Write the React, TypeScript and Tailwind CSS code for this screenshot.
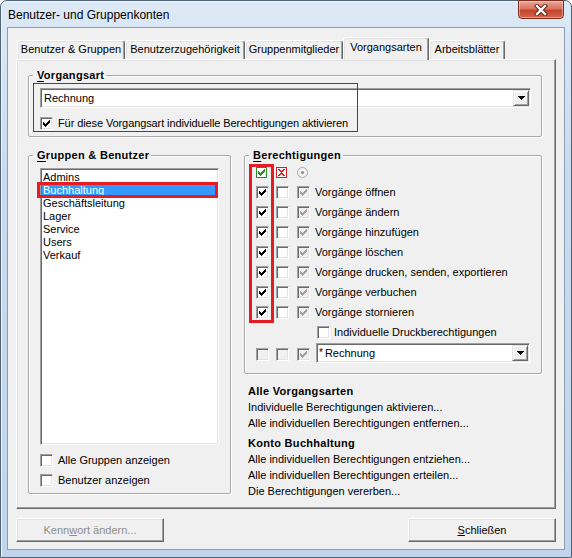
import React from "react";

const sunken =
  "border border-t-[#a0a0a0] border-l-[#a0a0a0] border-r-white border-b-white shadow-[inset_1px_1px_0_#696969,inset_-1px_-1px_0_#e3e3e3]";
const raised =
  "border border-t-[#e3e3e3] border-l-[#e3e3e3] border-r-[#696969] border-b-[#696969] shadow-[inset_1px_1px_0_#ffffff,inset_-1px_-1px_0_#a0a0a0]";

function Tick({ color }: { color: string }) {
  return (
    <svg width="7" height="7" viewBox="0 0 7 7" shapeRendering="crispEdges">
      <path
        d="M6 0h1v3h-1z M5 1h1v3h-1z M4 2h1v3h-1z M3 3h1v3h-1z M2 4h1v3h-1z M1 3h1v3h-1z M0 2h1v3h-1z"
        fill={color}
      />
    </svg>
  );
}

type CbProps = { checked?: boolean; disabled?: boolean };
function Cb({ checked, disabled }: CbProps) {
  return (
    <div
      className={`w-[13px] h-[13px] shrink-0 flex items-center justify-center ${sunken} ${
        disabled ? "bg-[#f0f0f0]" : "bg-white"
      }`}
    >
      {checked && <Tick color={disabled ? "#a0a0a0" : "#000000"} />}
    </div>
  );
}

function DropArrow() {
  return (
    <div className={`w-[16px] h-[16px] bg-[#f0f0f0] flex items-center justify-center ${raised}`}>
      <svg width="7" height="4" viewBox="0 0 7 4" shapeRendering="crispEdges">
        <path d="M0 0h7v1h-7z M1 1h5v1h-5z M2 2h3v1h-3z M3 3h1v1h-1z" fill="#000" />
      </svg>
    </div>
  );
}

function Combo({ children }: { children: React.ReactNode }) {
  return (
    <div className={`h-[20px] flex items-center bg-white pr-[1px] ${sunken}`}>
      <div className="flex-1 pl-[2px] leading-[16px] whitespace-nowrap">{children}</div>
      <DropArrow />
    </div>
  );
}

function Legend({ children }: { children: React.ReactNode }) {
  return (
    <legend className="ml-[4px] pl-[4px] pr-[2px] font-bold leading-[13px] tracking-[0.3px]">
      {children}
    </legend>
  );
}

const fieldset =
  "border border-[#a8a8a8] rounded-[2px] shadow-[inset_1px_1px_0_#ffffff,1px_1px_0_#ffffff]";

function Tab({ w, label, selected }: { w: number; label: string; selected?: boolean }) {
  return (
    <div
      style={{ width: w }}
      className={`shrink-0 flex items-center justify-center bg-[#f0f0f0] rounded-t-[3px] border border-b-0 border-t-white border-l-white border-r-[#696969] shadow-[inset_-1px_0_0_#a0a0a0,inset_1px_1px_0_#e3e3e3] whitespace-nowrap ${
        selected ? "h-[23px] -mb-[1px] relative z-10 pb-[4px]" : "h-[19px] pb-[1px]"
      }`}
    >
      {label}
    </div>
  );
}

const perms = [
  "Vorgänge öffnen",
  "Vorgänge ändern",
  "Vorgänge hinzufügen",
  "Vorgänge löschen",
  "Vorgänge drucken, senden, exportieren",
  "Vorgänge verbuchen",
  "Vorgänge stornieren",
];

const groups = ["Admins", "Buchhaltung", "Geschäftsleitung", "Lager", "Service", "Users", "Verkauf"];

function Button({ children, disabled }: { children: React.ReactNode; disabled?: boolean }) {
  return (
    <div
      className={`w-[148px] h-[24px] flex items-center justify-center bg-[#f0f0f0] border border-t-white border-l-white border-r-[#696969] border-b-[#696969] shadow-[inset_-1px_-1px_0_#a0a0a0,inset_1px_1px_0_#e3e3e3] ${
        disabled ? "text-[#8d8d8d]" : "text-black"
      }`}
    >
      {children}
    </div>
  );
}

export default function App() {
  return (
    <div className="w-[572px] h-[558px] font-['Liberation_Sans',Arial,sans-serif] text-[11px] text-black bg-white">
      <div className="w-full h-full flex flex-col rounded-t-[7px] border border-[#4f6378] bg-[linear-gradient(180deg,#dde9f6_0%,#c9dbef_30%,#c0d4eb_100%)] shadow-[inset_1px_1px_0_#eef5fc]">
        {/* Title bar */}
        <div className="h-[26px] flex items-start shrink-0">
          <span className="ml-[7px] mt-[6px] text-[12px] leading-[16px] text-black">
            Benutzer- und Gruppenkonten
          </span>
          <div className="ml-auto mr-[7px] w-[46px] h-[19px] -mt-[1px] rounded-b-[4px] border border-[#7b2c20] bg-[linear-gradient(180deg,#e9a898_0%,#d8735f_45%,#c4442b_55%,#d2654c_100%)] shadow-[inset_0_0_0_1px_rgba(255,220,210,0.5)] flex items-center justify-center">
            <svg width="14" height="12" viewBox="0 0 14 12">
              <path d="M3 2 L11 10 M11 2 L3 10" stroke="#5a1e14" strokeWidth="4.2" strokeLinecap="square" />
              <path d="M3 2 L11 10 M11 2 L3 10" stroke="#ffffff" strokeWidth="2.4" strokeLinecap="square" />
            </svg>
          </div>
        </div>

        {/* Client */}
        <div className="mx-[6px] mb-[7px] flex-1 border border-[#8b9db2] bg-[#f0f0f0] flex flex-col">
          {/* tab headers */}
          <div className="mt-[9px] ml-[9px] h-[22px] flex items-end">
            <Tab w={108} label="Benutzer & Gruppen" />
            <Tab w={120} label="Benutzerzugehörigkeit" />
            <Tab w={98} label="Gruppenmitglieder" />
            <Tab w={86} label="Vorgangsarten" selected />
            <Tab w={76} label="Arbeitsblätter" />
          </div>

          {/* panel */}
          <div className="mx-[8px] h-[450px] flex flex-col border border-t-white border-l-white border-r-[#696969] border-b-[#696969] shadow-[inset_-1px_-1px_0_#a0a0a0,inset_1px_1px_0_#e3e3e3]">
            {/* Vorgangsart */}
            <fieldset className={`mt-[9px] ml-[11px] mr-[13px] ${fieldset}`}>
              <Legend>
                <span className="underline underline-offset-[2px]">V</span>organgsart
              </Legend>
              <div className="relative flex flex-col pb-[6px]">
                <div className="mt-[6px] ml-[11px] mr-[10px]">
                  <Combo>
                    <span className="pl-[1px]">Rechnung</span>
                  </Combo>
                </div>
                <div className="mt-[9px] ml-[11px] flex items-center h-[13px]">
                  <Cb checked />
                  <span className="ml-[5px] tracking-[-0.1px]">Für diese Vorgangsart individuelle Berechtigungen aktivieren</span>
                </div>
                <div className="absolute left-[4px] top-[1px] w-[325px] h-[49px] border-solid border-[1px] border-red-600" />
              </div>
            </fieldset>

            {/* lower */}
            <div className="mt-[12px] flex items-start">
              {/* Gruppen & Benutzer */}
              <fieldset className={`ml-[11px] w-[203px] ${fieldset}`}>
                <Legend>
                  <span className="underline underline-offset-[2px]">G</span>ruppen &amp; Benutzer
                </Legend>
                <div className="flex flex-col pb-[6px]">
                  <div className="relative mt-[6px] ml-[11px] w-[179px] h-[277px]">
                    <div className={`w-full h-full bg-white p-[1px] ${sunken}`}>
                      {groups.map((g) => (
                        <div
                          key={g}
                          className={`h-[13px] leading-[14px] pl-[1px] whitespace-nowrap ${
                            g === "Buchhaltung" ? "bg-[#3399ff] text-white" : ""
                          }`}
                        >
                          {g}
                        </div>
                      ))}
                    </div>
                    <div className="absolute left-[-3px] top-[14px] w-[181px] h-[16px] border-[3px] border-[#e51c24]" />
                  </div>
                  <div className="mt-[9px] ml-[11px] h-[13px] flex items-center">
                    <Cb />
                    <span className="ml-[5px]">Alle Gruppen anzeigen</span>
                  </div>
                  <div className="mt-[7px] ml-[11px] h-[13px] flex items-center">
                    <Cb />
                    <span className="ml-[5px]">Benutzer anzeigen</span>
                  </div>
                </div>
              </fieldset>

              {/* right column */}
              <div className="ml-[13px] w-[298px] flex flex-col">
                <fieldset className={`w-[298px] ${fieldset}`}>
                  <Legend>
                    <span className="underline underline-offset-[2px]">B</span>erechtigungen
                  </Legend>
                  <div className="relative flex flex-col pb-[10px]">
                    {/* header icons */}
                    <div className="mt-[5px] h-[11px] flex items-center pl-[11px]">
                      <div className="w-[20px] shrink-0">
                        <div className="w-[11px] h-[11px] border border-[#2c8a2c] bg-white flex items-center justify-center">
                          <Tick color="#1f8f1f" />
                        </div>
                      </div>
                      <div className="w-[21px] shrink-0">
                        <div className="w-[11px] h-[11px] border border-[#d81e1e] bg-[#fff4f4] flex items-center justify-center">
                          <svg width="7" height="7" viewBox="0 0 7 7" shapeRendering="crispEdges">
                            <path
                              d="M0 0h2v1h-2z M5 0h2v1h-2z M1 1h2v1h-2z M4 1h2v1h-2z M2 2h3v1h-3z M3 3h1v1h-1z M2 4h3v1h-3z M1 5h2v1h-2z M4 5h2v1h-2z M0 6h2v1h-2z M5 6h2v1h-2z"
                              fill="#d81e1e"
                            />
                          </svg>
                        </div>
                      </div>
                      <div className="w-[18px] shrink-0">
                        <div className="w-[11px] h-[11px] rounded-full border border-[#a8a8a8] bg-[#f4f4f4] flex items-center justify-center">
                          <div className="w-[3px] h-[3px] rounded-full bg-[#8a8a8a]" />
                        </div>
                      </div>
                    </div>
                    {/* rows */}
                    <div className="mt-[4px] flex flex-col">
                      {perms.map((p) => (
                        <div key={p} className="h-[20px] flex items-center pl-[11px]">
                          <div className="w-[20px] shrink-0">
                            <Cb checked />
                          </div>
                          <div className="w-[21px] shrink-0">
                            <Cb />
                          </div>
                          <div className="w-[18px] shrink-0">
                            <Cb checked disabled />
                          </div>
                          <span className="whitespace-nowrap">{p}</span>
                        </div>
                      ))}
                    </div>
                    <div className="h-[17px] pt-[3px] flex items-center pl-[72px]">
                      <Cb />
                      <span className="ml-[4px] whitespace-nowrap">Individuelle Druckberechtigungen</span>
                    </div>
                    <div className="mt-[4px] h-[20px] flex items-center pl-[11px] pr-[11px]">
                      <div className="w-[20px] shrink-0 mt-[2px]">
                        <Cb disabled />
                      </div>
                      <div className="w-[21px] shrink-0 mt-[2px]">
                        <Cb disabled />
                      </div>
                      <div className="w-[19px] shrink-0 mt-[2px]">
                        <Cb checked disabled />
                      </div>
                      <div className="flex-1">
                        <Combo>
                          <span className="text-[10px] align-top">*</span>
                          <span className="ml-[2px]">Rechnung</span>
                        </Combo>
                      </div>
                    </div>
                    <div className="absolute left-[4px] top-[2px] w-[25px] h-[159px] border-[3px] border-[#e51c24]" />
                  </div>
                </fieldset>

                <div className="mt-[9px] ml-[4px] flex flex-col leading-[16px] whitespace-nowrap">
                  <div className="font-bold tracking-[0.3px]">Alle Vorgangsarten</div>
                  <div>Individuelle Berechtigungen aktivieren...</div>
                  <div>Alle individuellen Berechtigungen entfernen...</div>
                  <div className="mt-[4px] font-bold tracking-[0.3px]">Konto Buchhaltung</div>
                  <div>Alle individuellen Berechtigungen entziehen...</div>
                  <div>Alle individuellen Berechtigungen erteilen...</div>
                  <div>Die Berechtigungen vererben...</div>
                </div>
              </div>
            </div>
          </div>

          {/* buttons */}
          <div className="mt-[9px] mx-[8px] flex justify-between">
            <Button disabled>
              <span>
                Kenn<span className="underline">w</span>ort ändern...
              </span>
            </Button>
            <Button>
              <span>
                <span className="underline">S</span>chließen
              </span>
            </Button>
          </div>
        </div>
      </div>
    </div>
  );
}
